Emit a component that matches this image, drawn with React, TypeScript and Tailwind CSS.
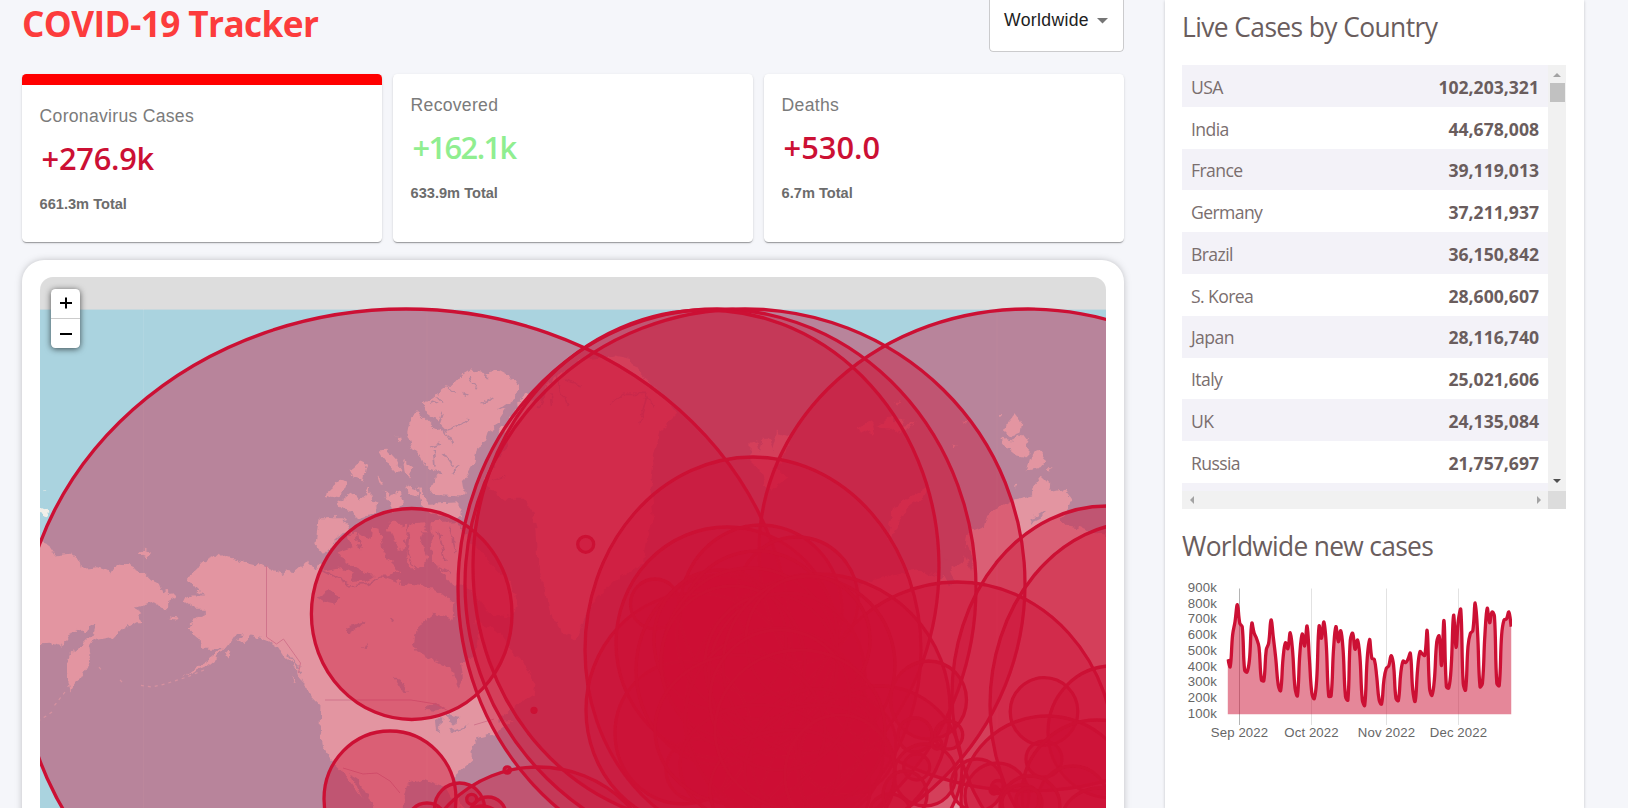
import React from "react";

type Ellipse = [cx: number, cy: number, rx: number, ry: number];

const countries: [string, string][] = [
  ["USA", "102,203,321"],
  ["India", "44,678,008"],
  ["France", "39,119,013"],
  ["Germany", "37,211,937"],
  ["Brazil", "36,150,842"],
  ["S. Korea", "28,600,607"],
  ["Japan", "28,116,740"],
  ["Italy", "25,021,606"],
  ["UK", "24,135,084"],
  ["Russia", "21,757,697"],
];

const outbreaks: Ellipse[] = [
  [406, 652, 386, 343],
  [717, 588, 259, 279],
  [745, 584, 280, 275],
  [706, 567, 233, 257],
  [1028, 550, 269, 241],
  [411.7, 614, 100.3, 105.5],
  [390, 799, 66, 68],
  [753, 650, 168, 193],
  [696, 710, 110, 117],
  [727, 643, 111, 116],
  [761, 610, 81, 85],
  [797, 600, 61, 63],
  [655, 604, 24.5, 25],
  [818, 709, 132, 135],
  [957, 757, 158, 175],
  [1107, 695, 155, 189],
  [1140, 705, 150, 183],
  [538, 892, 125, 125],
  [683, 733, 68, 71],
  [697, 770, 31, 31],
  [720, 670, 84, 95],
  [720, 640, 66, 70],
  [757, 635, 80, 84],
  [750, 660, 88, 92],
  [733, 662, 72, 76],
  [771, 665, 66, 70],
  [787, 675, 78, 82],
  [777, 720, 92, 92],
  [809, 665, 86, 88],
  [808, 640, 62, 64],
  [817, 755, 66, 66],
  [846, 745, 50, 50],
  [880, 768, 82, 82],
  [760, 765, 80, 60],
  [740, 730, 85, 75],
  [820, 770, 75, 65],
  [790, 790, 80, 60],
  [780, 700, 70, 70],
  [800, 730, 85, 80],
  [840, 775, 55, 60],
  [928.5, 700, 38, 39],
  [948.7, 735, 14, 14],
  [915, 735, 17, 17],
  [916.7, 767, 13, 13],
  [925, 775, 31, 31],
  [937, 744, 5, 5],
  [977, 785, 26, 26],
  [997, 796, 32, 33],
  [998, 787, 6.5, 6.5],
  [994, 790, 4, 4],
  [1044, 711.5, 33.8, 33.8],
  [1112, 732, 64, 66],
  [1044, 759, 18, 18],
  [1047, 800, 86, 84],
  [1097, 795, 75, 75],
  [1073, 801, 35, 35],
  [1030, 806, 30, 30],
  [1022, 803, 20, 18],
  [1100, 820, 38, 32],
  [1028, 800, 12, 12],
  [890, 812, 20, 18],
  [905, 795, 22, 24],
  [585.7, 544.3, 8, 8],
  [534, 710.3, 2, 2],
  [507.3, 770, 3.2, 3.2],
  [459.5, 808, 25, 25],
  [471.7, 799.3, 5, 5],
  [488, 815, 18, 18],
  [427, 823, 20, 20],
  [482, 827, 21, 21],
];

const westLand = [
  "60,65 85,75 105,105 150,100 180,120 185,145 230,140 260,150 272,162 290,132 330,135 370,155 395,180 415,190 425,215 440,208 465,230 440,245 440,270 400,245 370,255 345,262 365,305 345,305 305,330 278,358 265,348 230,355 215,360 205,375 210,400 200,440 180,475 165,485 150,510 140,470 140,430 150,400 175,380 200,355 220,340 228,312 212,315 195,340 180,325 155,335 130,372 115,380 90,370 40,372 40,60",
  "358,100 370,88 392,98 375,107",
  "445,287 475,292 470,298 450,294",
  "500,170 525,155 545,125 580,110 595,97 620,108 660,120 700,130 720,132 740,142 765,150 790,165 790,150 820,155 850,130 865,122 885,150 895,130 915,150 960,140 1000,160 990,185 1040,180 1070,160 1100,175 1150,190 1230,200 1270,230 1300,240 1300,295 1240,280 1190,320 1180,370 1190,395 1230,415 1290,445 1315,505 1330,470 1325,430 1360,405 1370,340 1360,300 1400,320 1440,340 1480,400 1520,440 1545,490 1540,520 1480,560 1440,590 1440,610 1480,600 1415,640 1370,650 1350,700 1355,720 1310,760 1295,790 1330,864 1310,864 1275,800 1210,775 1160,790 1150,830 1150,880 1080,880 1040,850 1000,800 965,750 935,720 905,680 897,620 900,560 870,530 860,500 840,480 820,430 790,410 770,380 740,360 690,345 665,368 650,358 670,345 650,337 625,375 590,395 560,420 520,445 480,475 515,455 560,435 590,410 612,385 545,385 540,355 505,325 520,295 550,285 550,265 520,265 487,240 520,222 555,222 530,210 500,175",
  "612,405 625,390 635,395 620,414",
  "815,465 830,490 822,485",
  "862,515 895,530 912,552 890,548",
  "895,-10 885,70 910,100 945,60 985,25 965,-10",
  "955,95 1000,80 980,50 1000,30 1050,60 1055,20 1080,25 1090,100 1110,120 1140,150 1100,165 1050,165 970,120",
  "1110,30 1160,10 1155,80 1130,90",
  "1170,10 1215,10 1200,60 1220,110 1210,140 1170,140 1160,110",
  "1230,60 1250,20 1310,10 1350,60 1410,130 1470,190 1490,240 1480,290 1410,280 1370,230 1330,190 1300,200 1270,160 1235,120",
];

const arcticLand = [
  "130,460 190,410 215,405 240,375 270,357 310,365 350,358 400,385 417,410 405,440 370,465 345,480 380,475 360,505 330,540 320,570 290,590 280,640 250,690 255,720 240,735 150,730 165,680 190,665 140,655 125,620 95,590 80,550 90,500 110,482 130,500 160,530 200,540 180,520 140,490",
  "0,600 30,610 55,640 45,665 20,640",
  "65,630 95,650 90,680 70,670",
  "80,705 110,715 110,735 85,730",
  "45,555 60,560 55,577",
  "15,735 60,720 70,760 40,785",
  "115,710 150,760 240,755 240,800 160,795 125,770",
  "20,820 60,820 60,840 20,840",
  "90,820 130,815 140,845 80,845",
  "150,815 230,812 240,850 150,850",
  "410,460 430,435 455,428 440,450 415,475",
  "350,550 400,485 395,520 370,545",
  "600,330 700,315 750,325 770,360 850,440 890,490 840,540 820,620 810,720 820,800 800,860 790,940 700,990 640,1050 600,1130 585,1170 550,1150 510,1090 490,1010 470,930 465,840 455,780 430,745 370,745 330,715 310,690 370,600 380,590 370,530 430,450 470,450 520,380 570,350",
];

const islandsWest = [
  "1075,600 1100,598 1130,630 1140,660 1120,660 1090,625",
  "985,660 1020,630 1040,640 1030,690 1000,680",
  "915,745 920,720 960,685 980,690 960,740 930,735",
  "950,760 990,730 1020,750 1045,715 1050,750 1075,760 1060,790 1010,805 1000,785 965,775",
  "1090,720 1130,740 1140,770 1100,750",
  "895,810 930,800 985,825 990,850 895,850",
  "1070,675 1088,698 1078,700",
  "1128,558 1140,555 1140,575",
  "50,770 80,778 90,785 75,797 50,790",
  "70,717 78,717 76,721",
];

const eastLand = [
  "0,580 20,572 28,605 40,560 60,580 66,600 80,540 95,560 110,550 120,580 104,600 90,640 70,650 90,665 110,680 60,720 40,705 30,660 0,640",
  "320,530 345,520 370,505 365,530 370,550 350,540 330,550",
  "380,530 400,518 430,490 432,512 460,510 450,525 500,515 440,550 420,535",
  "430,455 450,452 445,462",
  "480,460 490,458 490,466",
  "740,495 755,493 752,501",
  "792,488 815,520 810,550 780,560 760,545 770,515",
  "752,565 790,570 815,550 835,575 830,620 800,615 770,590",
  "832,660 850,600 865,595 887,630 870,650",
  "895,652 908,655 900,660",
  "632,513 648,516 640,520",
  "608,582 622,586 614,590",
  "790,705 802,702 800,712",
  "410,860 430,770 500,730 540,700 530,730 460,780 425,860",
  "650,850 700,830 710,790 780,750 845,735 845,715 875,677 905,705 900,725 945,715 967,745 950,785 930,805 950,825 1000,835 1080,850 1080,1690 340,1690 330,1000 400,980 500,960 570,980 640,930",
];

const smallWater = [
  "835,805 860,798 885,782 880,798 850,812 845,825",
  "640,900 655,880 672,940 660,960",
  "575,960 590,920 610,990 600,1010",
  "940,815 1000,805 1080,800 1080,855 1040,850 1000,838",
];

const chartPoints: number[] = [
  268, 290, 195, 155, 104, 160, 170, 300, 306, 270, 160, 190, 206, 232, 330, 332, 240, 220, 150, 205,
  268, 345, 362, 265, 218, 236, 188, 245, 355, 377, 250, 192, 228, 168, 270, 370, 386, 330, 168, 205,
  156, 225, 378, 378, 240, 170, 215, 182, 240, 380, 390, 210, 190, 238, 210, 260, 390, 406, 270, 208,
  265, 268, 320, 390, 402, 330, 295, 288, 257, 285, 385, 392, 310, 273, 278, 268, 250, 360, 394, 300,
  245, 252, 256, 182, 355, 376, 330, 215, 198, 286, 152, 350, 354, 290, 136, 232, 150, 119, 340, 360,
  230, 190, 182, 99, 190, 350, 340, 200, 115, 158, 126, 138, 340, 347, 195, 150, 147, 126, 170,
];

function buildCurve(values: number[]): string {
  const p = values.map((v, i) => [48.8 + i * 2.402, v / 3 - 10]);
  const tension = 0.4;
  const controls = p.map((c, i) => {
    const a = p[Math.max(i - 1, 0)];
    const b = p[Math.min(i + 1, p.length - 1)];
    const da = Math.hypot(c[0] - a[0], c[1] - a[1]);
    const db = Math.hypot(b[0] - c[0], b[1] - c[1]);
    const fa = (tension * da) / (da + db || 1);
    const fb = (tension * db) / (da + db || 1);
    return [
      c[0] - fa * (b[0] - a[0]),
      c[1] - fa * (b[1] - a[1]),
      c[0] + fb * (b[0] - a[0]),
      c[1] + fb * (b[1] - a[1]),
    ];
  });
  let d = `M${p[0][0]} ${p[0][1]}`;
  for (let i = 1; i < p.length; i++) {
    const q = controls[i - 1];
    const r = controls[i];
    d += `C${q[2].toFixed(2)} ${q[3].toFixed(2)} ${r[0].toFixed(2)} ${r[1].toFixed(2)} ${p[i][0].toFixed(2)} ${p[i][1].toFixed(2)}`;
  }
  return d;
}

function StatCard(props: { label: string; value: string; total: string; tone: string; active?: boolean }) {
  return (
    <div
      className={`h-[168px] w-[360px] overflow-hidden rounded-[4.4px] bg-white px-[17.6px] pt-[18px] shadow-[0_2px_1px_-1px_rgba(0,0,0,0.2),0_1px_1px_0_rgba(0,0,0,0.14),0_1px_3px_0_rgba(0,0,0,0.12)] ${
        props.active ? "border-t-[11px] border-[#ff0000]" : ""
      }`}
    >
      <div className="text-[17.6px] leading-[26.4px] tracking-[0.28px] text-[#7b7b7b]">{props.label}</div>
      <div className={`mt-[8px] pl-[2px] font-['Open_Sans',sans-serif] text-[30.8px] leading-[42px] font-semibold ${props.tone}`}>
        {props.value}
      </div>
      <div className="mt-[14px] text-[14.6px] leading-[22px] font-bold text-[#6c6c6c]">{props.total}</div>
    </div>
  );
}

function WorldMap() {
  return (
    <svg className="block h-[560px] w-[1066px]" viewBox="40 277 1066 560">
      <defs>
        <filter id="coast" x="-5%" y="-5%" width="110%" height="110%">
          <feTurbulence type="fractalNoise" baseFrequency="0.12" numOctaves="3" seed="4" result="n" />
          <feDisplacementMap in="SourceGraphic" in2="n" scale="8" xChannelSelector="R" yChannelSelector="G" />
        </filter>
      </defs>
      <rect x="40" y="277" width="1066" height="33" fill="#ddd" />
      <rect x="40" y="309.6" width="1066" height="530" fill="#aad3df" />
      <g filter="url(#coast)">
        <g fill="#f2efe9">
          <g transform="translate(20.5 520.5) scale(.3333)">
            {westLand.map((s, i) => <polygon key={i} points={s} />)}
          </g>
          <g transform="translate(20.5 250.5) scale(.3333)">
            {islandsWest.map((s, i) => <polygon key={i} points={s} />)}
          </g>
          <g transform="translate(380.5 250.5) scale(.3333)">
            {arcticLand.map((s, i) => <polygon key={i} points={s} />)}
          </g>
          <g transform="translate(750.5 250.5) scale(.3333)">
            {eastLand.map((s, i) => <polygon key={i} points={s} />)}
          </g>
        </g>
        <g fill="#aad3df">
          <g transform="translate(750 250) scale(.3333)">
            {smallWater.map((s, i) => <polygon key={i} points={s} />)}
          </g>
          <g transform="translate(20 520) scale(.3333)">
            <polygon points="890,232 930,210 960,230 940,255 915,250" />
            <polygon points="975,320 1000,315 1040,300 1010,330 985,345" />
            <polygon points="1025,380 1050,368 1040,385" />
            <polygon points="1120,470 1140,480 1165,515 1145,510" />
            <polygon points="1110,290 1125,295 1118,308" />
            <polygon points="1210,570 1250,545 1280,565 1245,572" />
            <polygon points="1245,600 1265,590 1258,640 1248,635" />
            <polygon points="1280,580 1315,590 1305,620 1285,600" />
            <polygon points="1290,632 1350,612 1330,625 1292,640" />
            <polygon points="990,762 1012,775 1050,840 1060,864 1035,850" />
            <polygon points="950,800 1010,820 1040,870 930,870" />
          </g>
        </g>
        <g transform="translate(380 250) scale(.3333)" stroke="#aad3df" fill="none" strokeWidth="5">
          <path d="M165 530l35 10 40-15 25-20M185 540l25 20 10 25M190 485l-12 35M150 590l30-10M160 600l5 50M190 610l30 40M245 430l20 10M270 385l20 30M310 365l15 20M205 410l20 20M170 440l20 20M305 460l35-15M150 455l25 8M240 640l-20 30" />
          <path d="M530 370l15 60 20 35M555 390l50 15M490 430l-15 45M690 460l40-30 70 0 20 40M800 440l-20 80M340 690l30-10M510 430l5 40" />
        </g>
        <g transform="translate(20 520) scale(.3333)" stroke="#aad3df" fill="none" strokeWidth="5">
          <path d="M785 405l60 60M800 400l40 45M905 150l40 20 40 25 60-5 40-20 80 20M1010 30l10 60M1150 60l40 90M1255 30l20 90M1290 20l15 80M1235 130l60 30" />
        </g>
      </g>
      <g stroke="#f2efe9" strokeWidth="1.2" fill="none" strokeDasharray="3 4" opacity="0.7">
        <path d="M204 670l-17 7-22 7-13 3-14-2M65 692l-11 14M52 712l-12 8M99 667l3 4M120 680l3 3" />
      </g>
      <g stroke="#d3b7c6" strokeWidth="1" fill="none">
        <path d="M266.5 566v71l10 7 7-5 17 24-2 10M325 700h86l25 4 14 8M474 725l20-6M343 768l20 6 14-1 13 8 10 12" />
      </g>
      <g stroke="#fff" strokeWidth="0.8" opacity="0.1">
        <path d="M143.5 309V838M427 309V838M997 309V838" />
      </g>
      <g stroke="#cc1034" strokeWidth="3.3" fill="#cc1034" fillOpacity="0.4">
        {outbreaks.map(([cx, cy, rx, ry], i) => (
          <ellipse key={i} cx={cx} cy={cy} rx={rx} ry={ry} />
        ))}
      </g>
    </svg>
  );
}

function CasesChart() {
  const line = buildCurve(chartPoints);
  const months: [number, string, string][] = [
    [60.5, "Sep 2022", "#b4b4b4"],
    [132.5, "Oct 2022", "#e2e2e2"],
    [207.5, "Nov 2022", "#e2e2e2"],
    [279.5, "Dec 2022", "#e2e2e2"],
  ];
  return (
    <svg
      className="mt-[16px] block h-[170px] w-[384px] font-['Liberation_Sans',Arial,sans-serif] text-[13.2px]"
      viewBox="3 0 384 170"
    >
      <clipPath id="plot">
        <rect x="47.5" y="0" width="285.5" height="150" />
      </clipPath>
      {months.map(([x, label, color]) => (
        <g key={label}>
          <path d={`M${x} 8.5V145`} stroke={color} />
          <text x={x} y="157" textAnchor="middle" fill="#666" letterSpacing="0.1">{label}</text>
        </g>
      ))}
      {[900, 800, 700, 600, 500, 400, 300, 200, 100].map((v, i) => (
        <text key={v} x="38" y={12 + i * 15.72} textAnchor="end" fill="#666" letterSpacing="0.15">{v}k</text>
      ))}
      <g clipPath="url(#plot)">
        <path d={`${line}V134.2H48.8Z`} fill="#cc1034" fillOpacity="0.5" />
        <path d={line} fill="none" stroke="#cc1034" strokeWidth="3.3" />
      </g>
    </svg>
  );
}

export default function App() {
  return (
    <div className="flex h-[808px] w-full overflow-hidden bg-[#f5f6fa] pl-[22px] font-['Liberation_Sans',Arial,sans-serif]">
      <main className="w-[1102px] shrink-0">
        <header className="flex h-[74px] items-start justify-between">
          <h1 className="font-['Open_Sans',sans-serif] text-[35.2px] leading-[46px] font-bold tracking-[-0.6px] text-[#fc3c3c]">
            COVID-19 Tracker
          </h1>
          <div className="flex h-[51.5px] w-[135px] justify-between rounded-b-[4.4px] border border-t-0 border-[#cbcbcd] bg-white pt-[8px] pr-[15px] pl-[14px]">
            <span className="text-[17.6px] leading-[24px] tracking-[0.35px] text-[#212121]">Worldwide</span>
            <svg className="mt-[10px] h-[6px] w-[11px]" viewBox="0 0 11 6">
              <path d="M0 0h11L5.5 5.5Z" fill="#757575" />
            </svg>
          </div>
        </header>
        <section className="flex justify-between">
          <StatCard active label="Coronavirus Cases" value="+276.9k" total="661.3m Total" tone="text-[#cc1034] tracking-[-0.25px]" />
          <StatCard label="Recovered" value="+162.1k" total="633.9m Total" tone="text-[#90ee90] tracking-[-1.6px]" />
          <StatCard label="Deaths" value="+530.0" total="6.7m Total" tone="text-[#cc1034]" />
        </section>
        <section className="mt-[17.5px] h-[620px] rounded-[22px] bg-white p-[17.6px] shadow-[0_0_8px_-2px_rgba(0,0,0,0.35)]">
          <div className="relative overflow-hidden rounded-[13px]">
            <WorldMap />
            <div className="absolute top-[12px] left-[11px] flex w-[29px] flex-col overflow-hidden rounded-[4.4px] bg-white shadow-[0_1px_6px_rgba(0,0,0,0.65)]">
              <button className="flex h-[30px] items-center justify-center border-b border-[#ccc] pb-[1px] pl-[2px]">
                <svg className="h-[12px] w-[12px] shrink-0" viewBox="0 0 12 12">
                  <path d="M0 6h12M6 .5v11" stroke="#000" strokeWidth="2" />
                </svg>
              </button>
              <button className="flex h-[29px] items-center justify-center pl-[2px]">
                <svg className="h-[12px] w-[12px] shrink-0" viewBox="0 0 12 12">
                  <path d="M0 6h12" stroke="#000" strokeWidth="2" />
                </svg>
              </button>
            </div>
          </div>
        </section>
      </main>
      <aside className="ml-[41px] h-[808px] w-[419px] shrink-0 bg-white px-[17px] pt-[9px] font-['Open_Sans',sans-serif] shadow-[0_1px_3px_rgba(0,0,0,0.2)]">
        <h3 className="text-[26.4px] leading-[36px] tracking-[-0.6px] text-[#6a5d5d]">Live Cases by Country</h3>
        <div className="mt-[20px] grid h-[444px] w-[384px] grid-cols-[366px_18px] grid-rows-[425.5px_18.5px]">
          <div className="overflow-hidden text-[17.6px]">
            {countries.map(([name, cases], i) => (
              <div
                key={name}
                className={`flex h-[41.8px] items-center justify-between pt-[2px] pr-[9px] pl-[9px] ${i % 2 === 0 ? "bg-[#f3f2f8]" : "bg-white"}`}
              >
                <span className="tracking-[-0.6px] text-[#7a6e6e]">{name}</span>
                <span className="font-bold text-[#6a5d5d]">{cases}</span>
              </div>
            ))}
            <div className="h-[8px] bg-[#f3f2f8]" />
          </div>
          <div className="flex flex-col items-center justify-between bg-[#f1f1f1] pt-[8px] pb-[8px]">
            <div className="flex flex-col items-center gap-[6px]">
              <svg className="h-[4px] w-[8px]" viewBox="0 0 8 4"><path d="M4 0l4 4H0z" fill="#a3a3a3" /></svg>
              <div className="h-[19px] w-[15px] bg-[#c1c1c1]" />
            </div>
            <svg className="h-[4px] w-[8px]" viewBox="0 0 8 4"><path d="M0 0h8L4 4z" fill="#505050" /></svg>
          </div>
          <div className="flex items-center justify-between bg-[#f1f1f1] px-[7.5px]">
            <svg className="h-[8px] w-[4px]" viewBox="0 0 4 8"><path d="M4 0v8L0 4z" fill="#a3a3a3" /></svg>
            <svg className="h-[8px] w-[4px]" viewBox="0 0 4 8"><path d="M0 0v8l4-4z" fill="#a3a3a3" /></svg>
          </div>
          <div className="bg-[#dcdcdc]" />
        </div>
        <h3 className="mt-[19px] text-[26.4px] leading-[36px] tracking-[-0.7px] text-[#6a5d5d]">Worldwide new cases</h3>
        <CasesChart />
      </aside>
    </div>
  );
}
